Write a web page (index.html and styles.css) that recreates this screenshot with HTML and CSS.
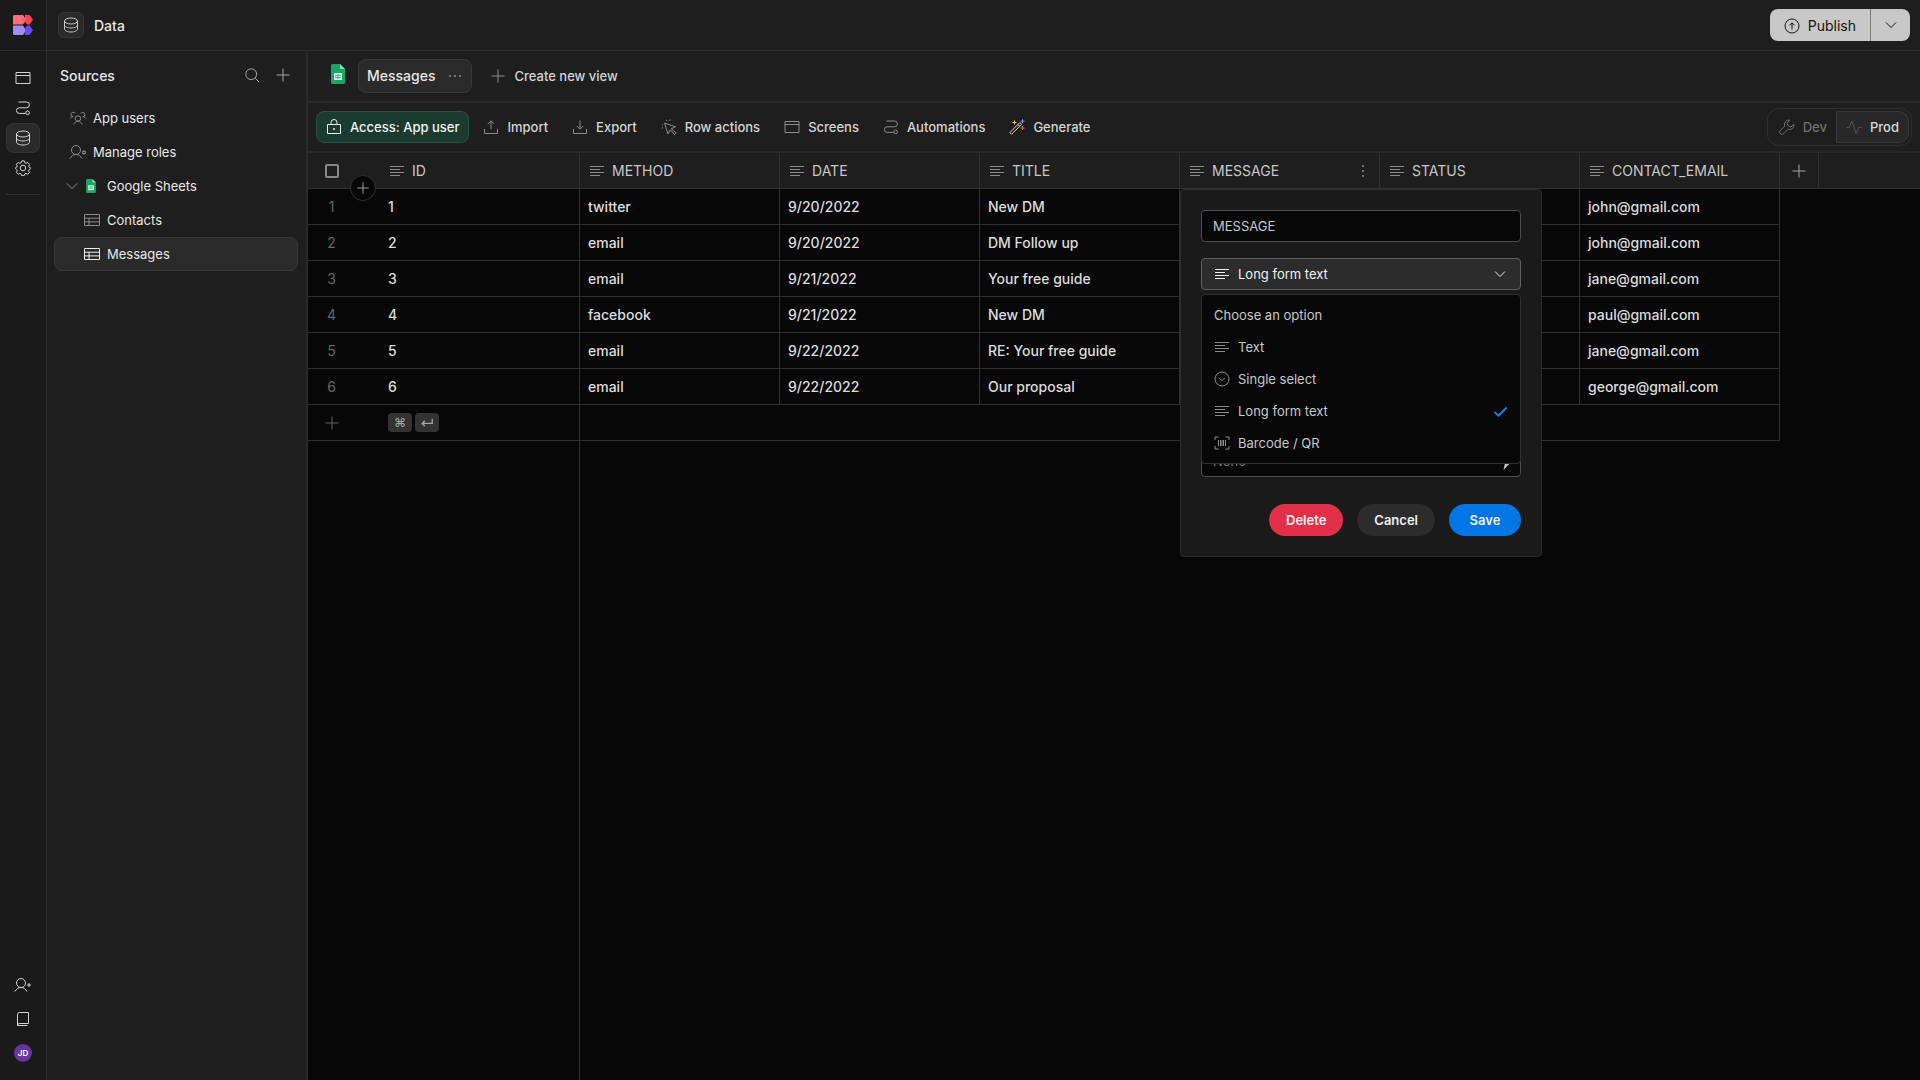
FILE: index.html
```html
<!DOCTYPE html>
<html lang="en">
<head>
<meta charset="utf-8">
<meta name="viewport" content="width=device-width, initial-scale=1">
<title>Data</title>
<link rel="stylesheet" href="styles.css">
</head>
<body>
<svg class="sprite" aria-hidden="true">
  <symbol id="window" viewBox="0 0 16 16"><path d="M1 2.500h14v11H1zM1 5.500h14"/></symbol>
  <symbol id="path" viewBox="0 0 16 16"><path d="M3.500 2H11.500a2.900 2.900 0 0 1 0 5.800H4.200a2.800 2.800 0 0 0 0 5.600H10.700"/><circle cx="12.600" cy="12.800" r="1.800"/></symbol>
  <symbol id="database" viewBox="0 0 16 16"><ellipse cx="8" cy="4" rx="6.500" ry="3"/><path d="M1.500 4v8c0 1.700 2.900 3 6.500 3s6.500-1.300 6.500-3V4M1.500 8c0 1.700 2.900 3 6.500 3s6.500-1.300 6.500-3"/></symbol>
  <symbol id="gear" viewBox="0 0 16 16"><circle cx="8" cy="8" r="2.800"/><path d="M6.700.9h2.600l.6 1.900 1.100.5 1.800-.8 1.800 1.900-.9 1.700.5 1.200 1.400.5v.9l-1.500.9-.5 1.200.9 1.700-1.800 1.800-1.700-.9-1.200.5-.6 1.700H6.700l-.6-1.700-1.200-.5-1.700.9-1.800-1.800.9-1.700-.5-1.200L.5 8.600v-.9l1.300-.6.5-1.200-.9-1.700 1.800-1.800 1.700.9 1.200-.5z"/></symbol>
  <symbol id="user-plus" viewBox="0 0 18 16"><circle cx="7" cy="6" r="4.500"/><path d="M1 14.500c1.300-2.500 3.300-4 6-4s4.700 1.500 6 4M15 6v4M13 8h4"/></symbol>
  <symbol id="user-gear" viewBox="0 0 18 16"><circle cx="7" cy="6" r="4.500"/><path d="M1 14.500c1.300-2.500 3.300-4 6-4s4.700 1.500 6 4"/><circle cx="15" cy="8.500" r="1.300"/><path d="M15 6.200v1M15 9.800v1M13 7.400l.9.500M16.100 9.100l.9.500M13 9.600l.9-.5M16.100 7.900l.9-.5"/></symbol>
  <symbol id="users" viewBox="0 0 18 16"><circle cx="9" cy="8.500" r="2.700"/><path d="M4.800 14.500c.8-2 2.300-3.200 4.200-3.200s3.400 1.200 4.200 3.200M1 8.500C1.800 7.300 2.900 6.700 4.200 6.700A2.200 2.200 0 1 1 6.200 3.600M17 8.500c-.8-1.200-1.900-1.800-3.200-1.800A2.200 2.200 0 1 0 11.800 3.600"/></symbol>
  <symbol id="book" viewBox="0 0 16 16"><path d="M13.500 12.500V1.500h-9a2 2 0 0 0-2 2v11M13.500 12.500h-9a2 2 0 0 0-2 2H12.500"/></symbol>
  <symbol id="search" viewBox="0 0 16 16"><circle cx="7.200" cy="7.200" r="5.400"/><path d="M11.200 11.200L15 15"/></symbol>
  <symbol id="plus" viewBox="0 0 16 16"><path d="M8 1.500v13M1.500 8h13"/></symbol>
  <symbol id="chevron" viewBox="0 0 16 16"><path d="M3 5.500l5 5 5-5"/></symbol>
  <symbol id="table" viewBox="0 0 16 16"><path d="M.5 2.500h15v11H.5zM.5 6.200h15M.5 9.900h15M5 6.200v7.300"/></symbol>
  <symbol id="lines" viewBox="0 0 16 16"><path d="M1 3.500h14M1 6.500h10M1 9.500h14M1 12.500h10"/></symbol>
  <symbol id="lock" viewBox="0 0 16 16"><path d="M1.500 5.500h13v9h-13zM5 5.500V3.500a3 3 0 0 1 6 0v2"/><circle class="solid" cx="8" cy="10" r=".6"/></symbol>
  <symbol id="import" viewBox="0 0 16 16"><path d="M1.500 10v4.500h13V10M8 10.500V2M4.800 5L8 1.800 11.200 5"/></symbol>
  <symbol id="export" viewBox="0 0 16 16"><path d="M1.500 10v4.500h13V10M8 1.500V10M4.800 7L8 10.200 11.200 7"/></symbol>
  <symbol id="click" viewBox="0 0 16 16"><path d="M3.500 4l11 3.800-4.300 2 5 4.200-1.700 1.500-4.300-4.600-2.200 4.100zM5.500.8l.4 1.200M9.300.5l-.6 1.400M1 5.600l1 .3M.8 9.200l1.200-.6"/></symbol>
  <symbol id="wrench" viewBox="0 0 16 16"><path d="M10.800 1.100a4.500 4.500 0 0 0-5.100 6L1.200 11.600a1.900 1.900 0 0 0 0 2.700l.5.500a1.900 1.900 0 0 0 2.700 0l4.500-4.500a4.500 4.500 0 0 0 6-5.100L12 8 9.200 6.800 8 4z"/></symbol>
  <symbol id="pulse" viewBox="0 0 16 16"><path d="M.5 8.500h2.700L5.800 2l4.400 12.500 2.400-6h2.900"/></symbol>
  <symbol id="publish" viewBox="0 0 16 16"><circle cx="8" cy="8" r="7"/><path d="M8 11.500V5M5.500 7.300L8 4.800l2.500 2.500"/></symbol>
  <symbol id="select" viewBox="0 0 16 16"><circle cx="8" cy="8" r="7"/><path d="M5 6.800l3 3 3-3"/></symbol>
  <symbol id="barcode" viewBox="0 0 16 16"><path d="M1 5V2h3.500M11.500 2H15v3M15 11v3h-3.500M4.500 14H1v-3M4.500 5v6M6.500 5v6M8 5v6M9.500 5v6M11.500 5v6"/></symbol>
  <symbol id="check" viewBox="0 0 16 16"><path d="M1.500 8.500l4.500 4L14.500 3.500"/></symbol>
  <symbol id="dots" viewBox="0 0 16 16"><circle class="solid" cx="3" cy="8" r=".6"/><circle class="solid" cx="8" cy="8" r=".6"/><circle class="solid" cx="13" cy="8" r=".6"/></symbol>
  <symbol id="sheets" viewBox="0 0 14 20"><path fill="#17a765" stroke="none" d="M1.500 0H9l5 5v13.500a1.500 1.500 0 0 1-1.500 1.500h-11A1.500 1.500 0 0 1 0 18.500v-17A1.500 1.500 0 0 1 1.500 0z"/><path fill="#8fd9b4" stroke="none" d="M9 0l5 5H9z"/><path fill="#d8f3e5" stroke="none" d="M3 9h8v7H3z"/><path stroke="#17a765" stroke-width=".7" d="M4 11.500h6M4 13.500h6M7 10v5"/></symbol>
</svg>

<div class="app">
  <nav class="rail" aria-label="Main">
    <a class="logo" href="#" aria-label="Home">
      <svg width="20" height="20" viewBox="0 0 20 20"><path fill="#ff6f75" d="M1 0h9l2 3v3.500L10 9.500H0V1z"/><path fill="#ff4553" d="M12 0h4.500L20 4.700l-3.500 4.800H14l-2-3z"/><path fill="#a08cfb" d="M0 10.500h10l2 3V17l-2 3H1l-1-1z"/><path fill="#6450ee" d="M14 10.500h2.500l3.500 4.700-3.500 4.800H12v-6.500z"/></svg>
    </a>
    <div class="rail-top">
      <a class="rail-item" href="#" aria-label="Screens"><svg class="icon"><use href="#window"/></svg></a>
      <a class="rail-item" href="#" aria-label="Automations"><svg class="icon"><use href="#path"/></svg></a>
      <a class="rail-item active" href="#" aria-label="Data"><svg class="icon"><use href="#database"/></svg></a>
      <a class="rail-item" href="#" aria-label="Settings"><svg class="icon"><use href="#gear"/></svg></a>
    </div>
    <div class="rail-bottom">
      <a class="rail-item" href="#" aria-label="Invite"><svg class="icon wide"><use href="#user-plus"/></svg></a>
      <a class="rail-item" href="#" aria-label="Docs"><svg class="icon"><use href="#book"/></svg></a>
      <button class="avatar">JD</button>
    </div>
  </nav>

  <div class="shell">
    <header class="topbar">
      <span class="page-icon"><svg class="icon"><use href="#database"/></svg></span>
      <h1>Data</h1>
      <div class="publish">
        <button class="publish-main"><svg class="icon"><use href="#publish"/></svg>Publish</button>
        <button class="publish-more" aria-label="Publish options"><svg class="icon"><use href="#chevron"/></svg></button>
      </div>
    </header>

    <div class="workspace">
      <aside class="sidebar">
        <div class="sidebar-head">
          <h2>Sources</h2>
          <button class="ghost" aria-label="Search"><svg class="icon"><use href="#search"/></svg></button>
          <button class="ghost" aria-label="Add source"><svg class="icon"><use href="#plus"/></svg></button>
        </div>
        <a class="source" href="#"><svg class="icon wide"><use href="#users"/></svg>App users</a>
        <a class="source" href="#"><svg class="icon wide"><use href="#user-gear"/></svg>Manage roles</a>
        <a class="source group" href="#"><svg class="icon"><use href="#chevron"/></svg><svg class="sheet small"><use href="#sheets"/></svg>Google Sheets</a>
        <a class="source child" href="#"><svg class="icon"><use href="#table"/></svg>Contacts</a>
        <a class="source child selected" href="#"><svg class="icon"><use href="#table"/></svg>Messages</a>
      </aside>

      <main class="content">
        <div class="views">
          <svg class="sheet"><use href="#sheets"/></svg>
          <button class="view-tab">Messages<svg class="icon"><use href="#dots"/></svg></button>
          <button class="new-view"><svg class="icon"><use href="#plus"/></svg>Create new view</button>
        </div>

        <div class="toolbar">
          <button class="tool access"><svg class="icon"><use href="#lock"/></svg>Access: App user</button>
          <button class="tool"><svg class="icon"><use href="#import"/></svg>Import</button>
          <button class="tool"><svg class="icon"><use href="#export"/></svg>Export</button>
          <button class="tool"><svg class="icon"><use href="#click"/></svg>Row actions</button>
          <button class="tool"><svg class="icon"><use href="#window"/></svg>Screens</button>
          <button class="tool"><svg class="icon"><use href="#path"/></svg>Automations</button>
          <button class="tool"><svg class="icon magic" viewBox="0 0 16 16"><path stroke="#d8d8d8" d="M.8 13.600L10.900 3.500l1.700 1.700L2.500 15.300zM8.800 5.600l1.700 1.700"/><path stroke="#e8c14d" d="M5.500 1.500v4M3.500 3.500h4"/><path stroke="#7d8dff" d="M13.500.2v4M11.500 2.200h4"/><path stroke="#f0616d" d="M13.500 7v4M11.500 9h4"/></svg>Generate</button>
          <div class="env">
            <button><svg class="icon"><use href="#wrench"/></svg>Dev</button>
            <button class="on"><svg class="icon"><use href="#pulse"/></svg>Prod</button>
          </div>
        </div>

        <div class="grid">
          <table>
            <colgroup><col class="c-num"><col class="c-data"><col class="c-data"><col class="c-data"><col class="c-data"><col class="c-data"><col class="c-data"><col class="c-data"><col class="c-add"><col></colgroup>
            <thead>
              <tr>
                <th class="num"><input type="checkbox" aria-label="Select all rows"><button class="insert" aria-label="Insert row"><svg class="icon"><use href="#plus"/></svg></button></th>
                <th><span class="head"><svg class="icon"><use href="#lines"/></svg>ID</span></th>
                <th><span class="head"><svg class="icon"><use href="#lines"/></svg>METHOD</span></th>
                <th><span class="head"><svg class="icon"><use href="#lines"/></svg>DATE</span></th>
                <th><span class="head"><svg class="icon"><use href="#lines"/></svg>TITLE</span></th>
                <th class="editing"><span class="head"><svg class="icon"><use href="#lines"/></svg>MESSAGE<button class="kebab" aria-label="Column menu"><svg class="icon"><use href="#dots"/></svg></button></span>
                  <form class="popover">
                    <input class="field" type="text" value="MESSAGE" aria-label="Name">
                    <div class="picker">
                      <svg class="icon"><use href="#lines"/></svg>
                      <select aria-label="Type"><option>Long form text</option><option>Text</option><option>Single select</option><option>Barcode / QR</option></select>
                      <svg class="icon"><use href="#chevron"/></svg>
                      <ul class="menu">
                        <li>Choose an option</li>
                        <li><svg class="icon"><use href="#lines"/></svg>Text</li>
                        <li><svg class="icon"><use href="#select"/></svg>Single select</li>
                        <li><svg class="icon"><use href="#lines"/></svg>Long form text<svg class="icon tick"><use href="#check"/></svg></li>
                        <li><svg class="icon"><use href="#barcode"/></svg>Barcode / QR</li>
                      </ul>
                    </div>
                    <div class="default">
                      <input class="field" type="text" placeholder="None" aria-label="Default value">
                      <svg class="bolt" viewBox="0 0 12 16"><path d="M7 0L0 9h4l-1.500 7L11 7H6z"/></svg>
                    </div>
                    <div class="actions">
                      <button type="button" class="pill danger">Delete</button>
                      <button type="button" class="pill">Cancel</button>
                      <button type="button" class="pill primary">Save</button>
                    </div>
                  </form>
                </th>
                <th><span class="head"><svg class="icon"><use href="#lines"/></svg>STATUS</span></th>
                <th><span class="head"><svg class="icon"><use href="#lines"/></svg>CONTACT_EMAIL</span></th>
                <th class="add"><button class="ghost" aria-label="Add column"><svg class="icon"><use href="#plus"/></svg></button></th>
                <th class="rest"></th>
              </tr>
            </thead>
            <tbody>
              <tr><td class="num">1</td><td>1</td><td>twitter</td><td>9/20/2022</td><td>New DM</td><td></td><td></td><td>john@gmail.com</td></tr>
              <tr><td class="num">2</td><td>2</td><td>email</td><td>9/20/2022</td><td>DM Follow up</td><td></td><td></td><td>john@gmail.com</td></tr>
              <tr><td class="num">3</td><td>3</td><td>email</td><td>9/21/2022</td><td>Your free guide</td><td></td><td></td><td>jane@gmail.com</td></tr>
              <tr><td class="num">4</td><td>4</td><td>facebook</td><td>9/21/2022</td><td>New DM</td><td></td><td></td><td>paul@gmail.com</td></tr>
              <tr><td class="num">5</td><td>5</td><td>email</td><td>9/22/2022</td><td>RE: Your free guide</td><td></td><td></td><td>jane@gmail.com</td></tr>
              <tr><td class="num">6</td><td>6</td><td>email</td><td>9/22/2022</td><td>Our proposal</td><td></td><td></td><td>george@gmail.com</td></tr>
              <tr><td class="num"><svg class="icon"><use href="#plus"/></svg></td><td><span class="keys"><kbd>⌘</kbd><kbd><svg class="icon" viewBox="0 0 16 16"><path d="M14 3v5.500H2.500M5.500 5.500l-3 3 3 3"/></svg></kbd></span></td><td colspan="6"></td></tr>
            </tbody>
          </table>
          <div class="pinned-rest"></div>
        </div>
      </main>
    </div>
  </div>
</div>
</body>
</html>
```

FILE: styles.css
```css
* { box-sizing: border-box; }

body {
  margin: 0;
  background: #070707;
  color: #e8e8e8;
  font: 400 13px/20px Inter, "Liberation Sans", sans-serif;
}

button, input, select {
  font: inherit;
  color: inherit;
}

button {
  display: flex;
  align-items: center;
  gap: 8px;
  margin: 0;
  padding: 0;
  border: 0;
  background: none;
}

a { color: inherit; text-decoration: none; }

h1, h2 { margin: 0; font-size: 14px; font-weight: 500; }

.sprite { position: absolute; width: 0; height: 0; }

.icon {
  flex: none;
  width: 16px;
  height: 16px;
  fill: none;
  stroke: currentColor;
  stroke-width: 1px;
}
.icon.wide { width: 18px; }
.solid { fill: currentColor; }

.sheet { flex: none; width: 14px; height: 20px; }
.sheet.small { width: 10px; height: 14px; }

.app { display: flex; min-height: 100vh; }

/* Icon rail */
.rail {
  display: flex;
  flex-direction: column;
  align-items: center;
  width: 47px;
  background: #1a1a1a;
  border-right: 1px solid #2c2c2c;
  color: #d4d4d4;
}
.logo {
  display: flex;
  align-items: center;
  justify-content: center;
  align-self: stretch;
  height: 51px;
  border-bottom: 1px solid #2c2c2c;
}
.rail-top { padding: 12px 0 11px; border-bottom: 1px solid #303030; }
.rail-bottom {
  display: flex;
  flex-direction: column;
  align-items: center;
  gap: 4px;
  margin-top: auto;
  padding-bottom: 18px;
}
.rail-item {
  display: flex;
  align-items: center;
  justify-content: center;
  width: 34px;
  height: 30px;
  border-radius: 8px;
}
.rail-item.active { background: #2a2a2a; box-shadow: inset 0 0 0 1px #343434; }
.avatar {
  justify-content: center;
  width: 18px;
  height: 18px;
  margin-top: 6px;
  border-radius: 50%;
  background: #6a34a0;
  color: #fff;
  font-size: 8px;
  font-weight: 600;
}

.shell { display: flex; flex: 1; flex-direction: column; min-width: 0; }

/* Top bar */
.topbar {
  display: flex;
  align-items: center;
  gap: 10px;
  height: 51px;
  padding: 0 10px 0 11px;
  background: #1e1e1e;
  border-bottom: 1px solid #2e2e2e;
}
.topbar h1 { padding-top: 2px; }
.page-icon {
  display: flex;
  align-items: center;
  justify-content: center;
  width: 26px;
  height: 26px;
  border: 1px solid #363636;
  border-radius: 6px;
  background: #2a2a2a;
  color: #c8c8c8;
}
.publish {
  display: flex;
  margin-left: auto;
  overflow: hidden;
  border-radius: 8px;
  background: #c8c8c8;
  color: #141414;
  font-size: 14px;
}
.publish button { height: 32px; }
.publish-main { padding: 2px 14px 0; }
.publish-more { padding: 0 11px 0 12px; border-left: 1px solid #7c7c7c; }

.workspace { display: flex; flex: 1; }

/* Sources */
.sidebar {
  flex: none;
  width: 261px;
  padding: 10px 8px 10px 7px;
  background: #1e1e1e;
  border-right: 2px solid #2a2a2a;
}
.sidebar-head {
  display: flex;
  align-items: center;
  gap: 15px;
  height: 28px;
  margin-bottom: 12px;
  padding: 0 7px 0 6px;
}
.sidebar-head h2 { margin-right: auto; padding-top: 2px; }
.ghost { color: #a4a4a4; }
.source {
  display: flex;
  align-items: center;
  gap: 6px;
  height: 34px;
  padding-left: 14px;
  border: 1px solid transparent;
  border-radius: 8px;
}
.source .icon { color: #8c8c8c; }
.source.group { padding-left: 9px; }
.source.group .sheet { margin-right: 5px; }
.source.child { gap: 7px; padding-left: 29px; }
.source.selected { border-color: #383838; background: #2a2a2a; }
.source.selected .icon { color: #f0f0f0; }

/* Views */
.content { display: flex; flex: 1; flex-direction: column; min-width: 0; }
.views {
  display: flex;
  align-items: center;
  height: 52px;
  padding-left: 23px;
  background: #1e1e1e;
  border-bottom: 2px solid #2a2a2a;
}
.views .sheet { margin-bottom: 4px; }
.view-tab {
  gap: 12px;
  height: 34px;
  margin: 0 18px 0 13px;
  padding: 0 8px;
  border: 1px solid #383838;
  border-radius: 8px;
  background: #2a2a2a;
  font-size: 14px;
  font-weight: 500;
}
.view-tab .icon, .new-view .icon { color: #8c8c8c; }
.new-view { color: #d4d4d4; font-weight: 500; }

/* Toolbar */
.toolbar {
  display: flex;
  align-items: center;
  gap: 4px;
  height: 50px;
  padding: 0 8px;
  background: #1e1e1e;
  border-bottom: 2px solid #2a2a2a;
  color: #d4d4d4;
  font-weight: 500;
}
.tool { height: 32px; padding: 0 10px; }
.tool .icon { color: #8c8c8c; }
.access {
  padding: 0 9px;
  border: 1px solid #235443;
  border-radius: 8px;
  background: #1b3a30;
  color: #f0f6f3;
}
.access .icon { color: #e8f3ee; }
.env {
  display: flex;
  margin-left: auto;
  padding: 2px;
  border: 1px solid #303030;
  border-radius: 12px;
  color: #707070;
}
.env button { height: 32px; padding: 0 9px; }
.env .on {
  border: 1px solid #383838;
  border-radius: 0 10px 10px 0;
  background: #282828;
  color: #d8d8d8;
}
.env .on .icon { color: #555; }

/* Data grid */
.grid { display: flex; flex: 1; flex-direction: column; }
table {
  width: 100%;
  table-layout: fixed;
  border-collapse: separate;
  border-spacing: 0;
  font-size: 14px;
}
.c-num { width: 72px; }
.c-data { width: 200px; }
.c-add { width: 39px; }
th, td {
  height: 36px;
  padding: 0 8px;
  border-right: 1px solid #303030;
  border-bottom: 1px solid #303030;
  text-align: left;
  font-weight: 500;
  white-space: nowrap;
}
td { color: #dcdcdc; }
th { background: #1e1e1e; color: #c8c8c8; font-weight: 400; }
.num, .rest { border-right: 0; }
td.num {
  padding: 0 25px 0 0;
  color: #666;
  font-weight: 400;
  text-align: center;
}
td.num .icon { display: block; margin: 0 auto; }
.head { display: flex; align-items: center; gap: 7px; padding-left: 1px; }
.head .icon { color: #8c8c8c; }
.kebab { margin-left: auto; transform: rotate(90deg); }
th.num, .editing { position: relative; }
th.num input {
  appearance: none;
  display: block;
  width: 14px;
  height: 14px;
  margin: 0 0 0 9px;
  border: 2px solid #888;
  border-radius: 2px;
}
.insert {
  position: absolute;
  left: 42px;
  bottom: -13px;
  justify-content: center;
  width: 26px;
  height: 26px;
  border: 1px solid #303030;
  border-radius: 50%;
  background: #070707;
  color: #b0b0b0;
}
.insert .icon { width: 14px; height: 14px; }
.add { padding: 0 11px; }
.keys { display: flex; gap: 3px; }
kbd {
  display: flex;
  align-items: center;
  justify-content: center;
  width: 24px;
  height: 19px;
  border-radius: 4px;
  background: #333;
  color: #a8a8a8;
  font: 400 12px/19px Inter, "DejaVu Sans", sans-serif;
}
kbd .icon { width: 14px; height: 14px; stroke-width: 1.5px; }
.pinned-rest { flex: 1; width: 272px; border-right: 1px solid #303030; }

/* Column editor */
.popover {
  position: absolute;
  z-index: 2;
  top: 36px;
  left: 0;
  display: flex;
  flex-direction: column;
  width: 362px;
  padding: 20px;
  border: 1px solid #2c2c2c;
  border-radius: 4px;
  background: #1a1a1a;
  font-size: 13px;
}
.field {
  display: block;
  width: 100%;
  height: 32px;
  padding: 0 11px;
  border: 1px solid #4c4c4c;
  border-radius: 4px;
  background: #070707;
}
.field::placeholder { color: #777; opacity: 1; }
.picker {
  position: relative;
  display: flex;
  align-items: center;
  gap: 8px;
  height: 32px;
  margin-top: 16px;
  padding: 0 12px;
  border: 1px solid #606060;
  border-radius: 4px;
  background: #2c2c2c;
  color: #f0f0f0;
}
.picker select {
  appearance: none;
  flex: 1;
  padding: 0;
  border: 0;
  background: none;
}
.menu {
  position: absolute;
  z-index: 1;
  top: 35px;
  left: -1px;
  right: -1px;
  margin: 0;
  padding: 4px 12px;
  border: 1px solid #303030;
  border-radius: 4px;
  background: #070707;
  color: #c8c8c8;
  list-style: none;
}
.menu li { display: flex; align-items: center; gap: 8px; height: 32px; }
.menu .icon { color: #8c8c8c; }
.menu .tick {
  width: 15px;
  height: 15px;
  margin-left: auto;
  color: #1b84e8;
  stroke-width: 2px;
}
.default { position: relative; margin-top: 155px; }
.bolt {
  position: absolute;
  top: 9px;
  right: 8px;
  width: 12px;
  height: 16px;
  fill: #c8c8c8;
}
.actions { display: flex; justify-content: flex-end; gap: 14px; margin-top: 27px; }
.pill {
  justify-content: center;
  min-width: 72px;
  height: 32px;
  padding: 0 17px;
  border-radius: 16px;
  background: #2c2c2c;
  color: #f0f0f0;
  font-weight: 600;
}
.danger { background: #e23048; }
.primary { background: #0276e4; }
```
